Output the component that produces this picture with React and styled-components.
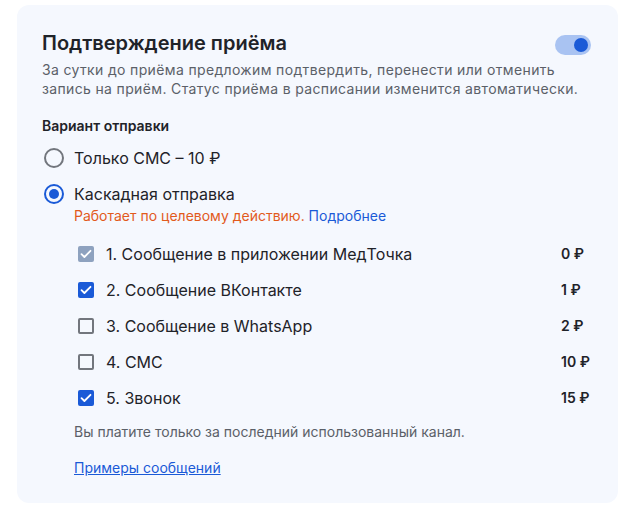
import React, { useState } from 'react'
import styled, { createGlobalStyle } from 'styled-components'

const GlobalStyle = createGlobalStyle`
  * { box-sizing: border-box; }
  body {
    margin: 0;
    background: #ffffff;
    font-family: Inter, "Noto Sans", sans-serif;
    color: #1f2329;
  }
`

const Page = styled.div`
  padding: 5px 13px 0 17px;
`

const Card = styled.div`
  width: 601px;
  height: 498px;
  background: #f5f8fe;
  border-radius: 12px;
  padding: 26px 27px 0 25px;
`

const Header = styled.div`
  display: flex;
  justify-content: space-between;
  align-items: center;
`

const Title = styled.h2`
  margin: 0;
  font-size: 20px;
  line-height: 24px;
  font-weight: 600;
  color: #1f2329;
`

const Toggle = styled.div`
  width: 36px;
  height: 20px;
  border-radius: 10px;
  background: #a9c3f2;
  display: flex;
  align-items: center;
  justify-content: ${p => (p.on ? 'flex-end' : 'flex-start')};
  padding: 0 3px;
  margin-top: 4px;
  cursor: pointer;
`

const Knob = styled.div`
  width: 14px;
  height: 14px;
  border-radius: 50%;
  background: #1a5ad7;
`

const Description = styled.p`
  margin: 5px 0 0;
  font-size: 14px;
  letter-spacing: 0.35px;
  line-height: 19px;
  white-space: nowrap;
  color: #5b6068;
`

const SectionLabel = styled.div`
  margin-top: 18px;
  font-size: 14px;
  line-height: 20px;
  font-weight: 600;
  color: #1f2329;
`

const RadioRow = styled.label`
  display: flex;
  align-items: center;
  gap: 10px;
  margin-top: ${p => p.mt}px;
  font-size: 16px;
  line-height: 24px;
  color: #1f2329;
  cursor: pointer;
`

const RadioCircle = styled.span`
  width: 20px;
  height: 20px;
  border-radius: 50%;
  border: 2px solid ${p => (p.checked ? '#1a5ad7' : '#72767d')};
  display: flex;
  align-items: center;
  justify-content: center;
  margin-left: 2px;
  &::after {
    content: '';
    width: 10px;
    height: 10px;
    border-radius: 50%;
    background: ${p => (p.checked ? '#1a5ad7' : 'transparent')};
  }
`

const Note = styled.div`
  margin: 0 0 0 32px;
  font-size: 14px;
  line-height: 20px;
  color: #e25a1c;
`

const Link = styled.a`
  color: #1a5ad7;
  text-decoration: ${p => (p.underline ? 'underline' : 'none')};
  cursor: pointer;
`

const Channels = styled.div`
  margin: 16px 0 0 36px;
  display: flex;
  flex-direction: column;
  gap: 12px;
`

const ChannelRow = styled.label`
  display: flex;
  align-items: center;
  height: 24px;
  font-size: 16px;
  line-height: 24px;
  color: #1f2329;
  cursor: pointer;
`

const Box = styled.span`
  width: 16px;
  height: 16px;
  border-radius: 2px;
  flex-shrink: 0;
  display: flex;
  align-items: center;
  justify-content: center;
  margin-right: 12px;
  background: ${p => (p.disabled ? '#8ea2bf' : p.checked ? '#1a5ad7' : 'transparent')};
  border: ${p => (p.checked ? 'none' : '2px solid #72767d')};
`

const ChannelName = styled.span`
  flex: 1;
`

const Price = styled.span`
  width: 30px;
  font-size: 14px;
  font-weight: 600;
  color: #1f2329;
`

const Footer = styled.div`
  margin: 12px 0 0 32px;
  font-size: 14px;
  line-height: 20px;
  color: #5b6068;
`

const Examples = styled.div`
  margin: 16px 0 0 32px;
  font-size: 14px;
  line-height: 20px;
`

const Check = () => (
  <svg width="12" height="10" viewBox="0 0 12 10" fill="none">
    <path d="M1.5 5.2L4.4 8L10.5 1.8" stroke="#fff" strokeWidth="1.8" strokeLinecap="round" strokeLinejoin="round" />
  </svg>
)

const channels = [
  { name: '1. Сообщение в приложении МедТочка', price: '0 ₽', checked: true, disabled: true },
  { name: '2. Сообщение ВКонтакте', price: '1 ₽', checked: true },
  { name: '3. Сообщение в WhatsApp', price: '2 ₽', checked: false },
  { name: '4. СМС', price: '10 ₽', checked: false },
  { name: '5. Звонок', price: '15 ₽', checked: true },
]

export default function App() {
  const [mode, setMode] = useState('cascade')
  return (
    <Page>
      <GlobalStyle />
      <Card>
        <Header>
          <Title>Подтверждение приёма</Title>
          <Toggle on>
            <Knob />
          </Toggle>
        </Header>
        <Description>
          За сутки до приёма предложим подтвердить, перенести или отменить
          <br />
          запись на приём. Статус приёма в расписании изменится автоматически.
        </Description>
        <SectionLabel>Вариант отправки</SectionLabel>
        <RadioRow mt={10} onClick={() => setMode('sms')}>
          <RadioCircle checked={mode === 'sms'} />
          Только СМС – 10 ₽
        </RadioRow>
        <RadioRow mt={12} onClick={() => setMode('cascade')}>
          <RadioCircle checked={mode === 'cascade'} />
          Каскадная отправка
        </RadioRow>
        <Note>
          Работает по целевому действию. <Link>Подробнее</Link>
        </Note>
        <Channels>
          {channels.map(c => (
            <ChannelRow key={c.name}>
              <Box checked={c.checked} disabled={c.disabled}>
                {c.checked && <Check />}
              </Box>
              <ChannelName>{c.name}</ChannelName>
              <Price>{c.price}</Price>
            </ChannelRow>
          ))}
        </Channels>
        <Footer>Вы платите только за последний использованный канал.</Footer>
        <Examples>
          <Link underline>Примеры сообщений</Link>
        </Examples>
      </Card>
    </Page>
  )
}
